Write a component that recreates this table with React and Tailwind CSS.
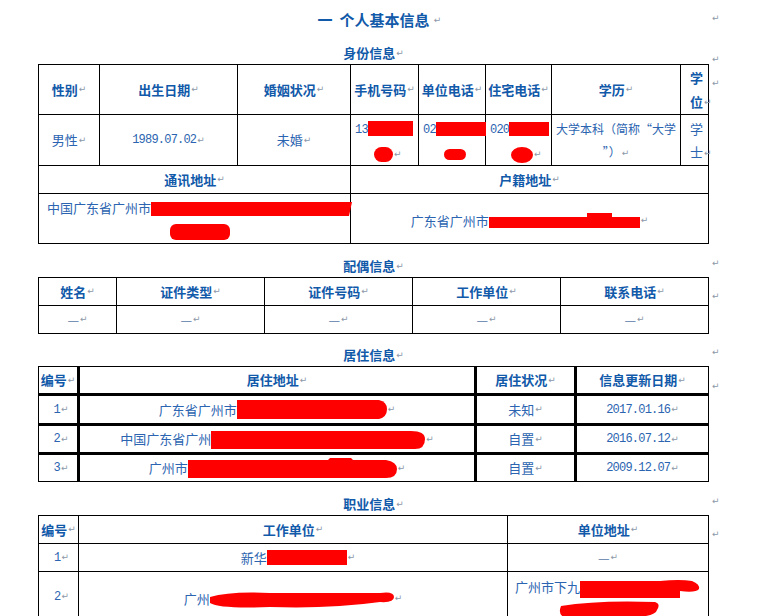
import React from "react";

function M() {
  return (
    <span className="inline-block ml-px text-[9px] leading-none font-normal text-[#8c98a8] font-['DejaVu_Sans',sans-serif] align-middle">
      ↵
    </span>
  );
}

function Red({ className = "" }) {
  return <span className={"inline-block bg-[#ff0000] align-middle " + className} />;
}

function Blot({ w, h, d, className = "" }) {
  return (
    <svg width={w} height={h} viewBox={`0 0 ${w} ${h}`} className={"inline-block align-middle " + className}>
      <path d={d} fill="#ff0000" />
    </svg>
  );
}

const num = "font-['Liberation_Mono',monospace] text-[12px] tracking-[-0.8px]";

export default function App() {
  return (
    <div className="w-[761px] h-[616px] overflow-hidden bg-white pl-[38px] flex flex-col font-['Noto_Sans_CJK_SC','Noto_Sans',sans-serif] text-[13px] text-[#2b64b0]">
      {/* title */}
      <div className="flex h-[40px] shrink-0">
        <div className="w-[671px] flex items-center justify-center pl-[12px] text-[15px] font-bold text-[#1159a9] whitespace-nowrap">
          一&nbsp;&nbsp;个人基本信息&nbsp;<M />
        </div>
        <div className="pl-[2px] pt-[7px]"><M /></div>
      </div>

      {/* 身份信息 */}
      <div className="flex h-[24px] shrink-0">
        <div className="w-[671px] flex items-center justify-center pt-[2px] font-bold text-[#1159a9]">
          身份信息<M />
        </div>
        <div className="pl-[2px] pt-[8px]"><M /></div>
      </div>

      <div className="flex shrink-0">
        <div className="w-[671px] grid grid-cols-[61px_138px_113px_68px_67px_66px_129px_28px] border-l border-t border-black">
          {["性别", "出生日期", "婚姻状况", "手机号码", "单位电话", "住宅电话", "学历"].map((t) => (
            <div key={t} className="h-[50px] border-r border-b border-black flex items-center justify-center font-bold text-[#1159a9] whitespace-nowrap">
              {t}<M />
            </div>
          ))}
          <div className="h-[50px] border-r border-b border-black flex flex-col justify-center pl-[9px] leading-[24px] font-bold text-[#1159a9]">
            <div>学</div>
            <div className="whitespace-nowrap">位<M /></div>
          </div>

          <div className="h-[51px] border-r border-b border-black flex items-center justify-center">男性<M /></div>
          <div className="h-[51px] border-r border-b border-black flex items-center justify-center">
            <span className={num}>1989.07.02</span><M />
          </div>
          <div className="h-[51px] border-r border-b border-black flex items-center justify-center">未婚<M /></div>
          <div className="h-[51px] border-r border-b border-black flex flex-col justify-center pl-[4px] leading-[23px]">
            <div className="whitespace-nowrap"><span className={num}>13</span><Red className="w-[45px] h-[15px]" /></div>
            <div className="pl-[19px] whitespace-nowrap"><Red className="w-[19px] h-[15px] rounded-full" /><M /></div>
          </div>
          <div className="h-[51px] border-r border-b border-black flex flex-col justify-center pl-[4px] leading-[23px]">
            <div className="whitespace-nowrap"><span className={num}>02</span><Red className="w-[50px] h-[14px]" /></div>
            <div className="pl-[21px]"><Red className="w-[22px] h-[11px] rounded-full" /></div>
          </div>
          <div className="h-[51px] border-r border-b border-black flex flex-col justify-center pl-[4px] leading-[23px]">
            <div className="whitespace-nowrap"><span className={num}>020</span><Red className="w-[40px] h-[14px]" /></div>
            <div className="pl-[21px] whitespace-nowrap"><Red className="w-[22px] h-[16px] rounded-[50%]" /><M /></div>
          </div>
          <div className="h-[51px] border-r border-b border-black flex flex-col justify-center items-center text-[12px] leading-[23px] whitespace-nowrap">
            <div>大学本科（简称“大学</div>
            <div>”）<M /></div>
          </div>
          <div className="h-[51px] border-r border-b border-black flex flex-col justify-center pl-[9px] leading-[23px]">
            <div>学</div>
            <div className="whitespace-nowrap">士<M /></div>
          </div>

          <div className="col-span-3 h-[28px] border-r border-b border-black flex items-center justify-center font-bold text-[#1159a9]">通讯地址<M /></div>
          <div className="col-span-5 h-[28px] border-r border-b border-black flex items-center justify-center font-bold text-[#1159a9]">户籍地址<M /></div>

          <div className="col-span-3 h-[50px] border-r border-b border-black flex flex-col justify-center pl-[8px] leading-[23px]">
            <div className="whitespace-nowrap">
              中国广东省广州市
              <Blot w={201} h={14} d="M0 0 H201 L198 14 H0 Z" />
            </div>
            <div className="pl-[123px]"><Red className="w-[60px] h-[16px] rounded-[6px]" /></div>
          </div>
          <div className="col-span-5 h-[50px] border-r border-b border-black flex items-center justify-center pt-[4px] whitespace-nowrap">
            广东省广州市
            <Blot w={151} h={15} d="M0 4 H98 V0 H123 V4 H151 V15 H0 Z" />
            <M />
          </div>
        </div>
        <div className="pl-[2px] pt-[8px]"><M /></div>
      </div>

      {/* 配偶信息 */}
      <div className="flex h-[33px] shrink-0">
        <div className="w-[671px] flex items-center justify-center pt-[11px] font-bold text-[#1159a9]">
          配偶信息<M />
        </div>
        <div className="pl-[2px] pt-[8px]"><M /></div>
      </div>

      <div className="flex shrink-0">
        <div className="w-[671px] grid grid-cols-[78px_148px_148px_148px_148px] border-l border-t border-black">
          {["姓名", "证件类型", "证件号码", "工作单位", "联系电话"].map((t) => (
            <div key={t} className="h-[28px] border-r border-b border-black flex items-center justify-center font-bold text-[#1159a9]">
              {t}<M />
            </div>
          ))}
          {[1, 2, 3, 4, 5].map((i) => (
            <div key={i} className="h-[28px] border-r border-b border-black flex items-center justify-center text-[#5a7aa6]">
              —<M />
            </div>
          ))}
        </div>
        <div className="pl-[2px] pt-[8px]"><M /></div>
      </div>

      {/* 居住信息 */}
      <div className="flex h-[32px] shrink-0">
        <div className="w-[671px] flex items-center justify-center pt-[10px] font-bold text-[#1159a9]">
          居住信息<M />
        </div>
        <div className="pl-[2px] pt-[7px]"><M /></div>
      </div>

      <div className="flex shrink-0">
        <div className="w-[671px] grid grid-cols-[41px_397px_100px_131px] border border-black">
          <div className="h-[29px] border-r-[3px] border-b-[3px] border-black flex items-center justify-center font-bold text-[#1159a9] whitespace-nowrap">编号<M /></div>
          <div className="h-[29px] border-r-[3px] border-b-[3px] border-black flex items-center justify-center font-bold text-[#1159a9]">居住地址<M /></div>
          <div className="h-[29px] border-r-[3px] border-b-[3px] border-black flex items-center justify-center font-bold text-[#1159a9]">居住状况<M /></div>
          <div className="h-[29px] border-b-[3px] border-black flex items-center justify-center font-bold text-[#1159a9]">信息更新日期<M /></div>

          <div className="h-[30px] border-r-[3px] border-b-[3px] border-black flex items-center justify-center pl-[6px]"><span className={num}>1</span><M /></div>
          <div className="h-[30px] border-r-[3px] border-b-[3px] border-black flex items-center justify-center whitespace-nowrap">
            广东省广州市
            <Blot w={150} h={19} d="M0 0 H142 Q150 2 150 9 Q150 17 142 19 H0 Z" />
            <M />
          </div>
          <div className="h-[30px] border-r-[3px] border-b-[3px] border-black flex items-center justify-center">未知<M /></div>
          <div className="h-[30px] border-b-[3px] border-black flex items-center justify-center"><span className={num}>2017.01.16</span><M /></div>

          <div className="h-[29px] border-r-[3px] border-b-[3px] border-black flex items-center justify-center pl-[6px]"><span className={num}>2</span><M /></div>
          <div className="h-[29px] border-r-[3px] border-b-[3px] border-black flex items-center justify-center whitespace-nowrap">
            中国广东省广州
            <Blot w={214} h={19} d="M0 1 H200 Q214 1 214 9 Q214 19 204 19 H0 Z" />
            <M />
          </div>
          <div className="h-[29px] border-r-[3px] border-b-[3px] border-black flex items-center justify-center">自置<M /></div>
          <div className="h-[29px] border-b-[3px] border-black flex items-center justify-center"><span className={num}>2016.07.12</span><M /></div>

          <div className="h-[26px] border-r-[3px] border-black flex items-center justify-center pl-[6px]"><span className={num}>3</span><M /></div>
          <div className="h-[26px] border-r-[3px] border-black flex items-center justify-center whitespace-nowrap">
            广州市
            <Blot w={209} h={20} d="M0 2 H140 L142 0 H163 L165 2 H198 Q209 4 209 11 Q209 20 198 20 H0 Z" />
            <M />
          </div>
          <div className="h-[26px] border-r-[3px] border-black flex items-center justify-center">自置<M /></div>
          <div className="h-[26px] border-black flex items-center justify-center"><span className={num}>2009.12.07</span><M /></div>
        </div>
        <div className="pl-[2px] pt-[9px]"><M /></div>
      </div>

      {/* 职业信息 */}
      <div className="flex h-[33px] shrink-0">
        <div className="w-[671px] flex items-center justify-center pt-[11px] font-bold text-[#1159a9]">
          职业信息<M />
        </div>
        <div className="pl-[2px] pt-[8px]"><M /></div>
      </div>

      <div className="flex shrink-0">
        <div className="w-[671px] grid grid-cols-[40px_429px_201px] border-l border-t border-black">
          <div className="h-[28px] border-r border-b border-black flex items-center justify-center font-bold text-[#1159a9] whitespace-nowrap">编号<M /></div>
          <div className="h-[28px] border-r border-b border-black flex items-center justify-center font-bold text-[#1159a9]">工作单位<M /></div>
          <div className="h-[28px] border-r border-b border-black flex items-center justify-center font-bold text-[#1159a9]">单位地址<M /></div>

          <div className="h-[28px] border-r border-b border-black flex items-center justify-center pl-[6px]"><span className={num}>1</span><M /></div>
          <div className="h-[28px] border-r border-b border-black flex items-center justify-center pl-[10px] whitespace-nowrap">
            新华<Red className="w-[80px] h-[15px]" /><M />
          </div>
          <div className="h-[28px] border-r border-b border-black flex items-center justify-center text-[#5a7aa6]">—<M /></div>

          <div className="h-[50px] border-r border-b border-black flex items-center justify-center pl-[6px]"><span className={num}>2</span><M /></div>
          <div className="h-[50px] border-r border-b border-black flex items-center justify-center pt-[4px] whitespace-nowrap">
            广州
            <Blot w={184} h={20} d="M0 8 Q20 2 60 4 H170 Q184 2 184 8 Q184 14 170 13 Q120 20 60 18 Q10 20 0 14 Z" />
            <M />
          </div>
          <div className="h-[50px] border-r border-b border-black flex flex-col pl-[7px] pt-[5px] leading-[20px]">
            <div className="whitespace-nowrap">
              广州市下九
              <Blot w={120} h={19} d="M0 2 H80 Q100 0 112 2 Q120 5 119 10 Q116 14 100 12 V19 H0 Z" />
            </div>
            <div className="pl-[42px]">
              <Blot w={106} h={18} d="M4 6 Q40 0 98 2 Q104 4 100 10 Q98 18 60 18 H10 Q0 16 4 6 Z" />
            </div>
          </div>
        </div>
        <div className="pl-[2px] pt-[8px]"><M /></div>
      </div>
    </div>
  );
}
